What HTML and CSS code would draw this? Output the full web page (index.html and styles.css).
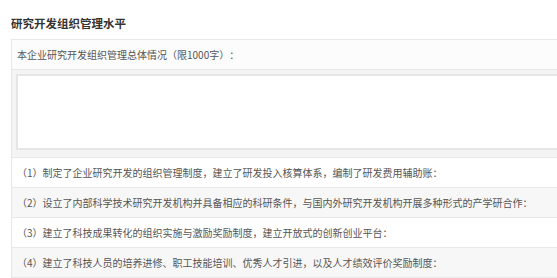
FILE: index.html
```html
<!DOCTYPE html>
<html>

<head>
    <meta charset="UTF-8">
    <meta name="viewport" content="width=device-width, initial-scale=1.0">
    <title>研究开发组织管理水平</title>
    <link rel="stylesheet" href="styles.css">
</head>

<body>
    <h3 class="section-title">研究开发组织管理水平</h3>
    <table class="form-table">
        <tr class="row-head">
            <td>本企业研究开发组织管理总体情况（限1000字）：</td>
        </tr>
        <tr class="row-input">
            <td><textarea class="summary"></textarea></td>
        </tr>
        <tr>
            <td>（1）制定了企业研究开发的组织管理制度，建立了研发投入核算体系，编制了研发费用辅助账：</td>
        </tr>
        <tr class="row-alt">
            <td>（2）设立了内部科学技术研究开发机构并具备相应的科研条件，与国内外研究开发机构开展多种形式的产学研合作：</td>
        </tr>
        <tr>
            <td>（3）建立了科技成果转化的组织实施与激励奖励制度，建立开放式的创新创业平台：</td>
        </tr>
        <tr class="row-alt">
            <td>（4）建立了科技人员的培养进修、职工技能培训、优秀人才引进，以及人才绩效评价奖励制度：</td>
        </tr>
    </table>
</body>

</html>
```

FILE: styles.css
```css
body {
    margin: 0;
    padding: 17px 0 0 11px;
    background-color: #fff;
    font-family: 'Noto Sans CJK SC', 'Liberation Sans', sans-serif;
    color: #555;
    overflow: hidden;
}

.section-title {
    margin: 0 0 10px 0;
    font-size: 11.5px;
    line-height: 12px;
    font-weight: bold;
    color: #333;
}

.form-table {
    width: 600px;
    border-collapse: collapse;
    border-left: 1px solid #e8e8e8;
}

.form-table td {
    height: 29px;
    padding: 0 0 0 5px;
    border-top: 1px solid #e8e8e8;
    border-bottom: 1px solid #e8e8e8;
    font-size: 10px;
    line-height: 12px;
    white-space: nowrap;
    text-spacing-trim: space-all;
}

.row-head td {
    background-color: #fcfcfc;
}

.row-input td {
    height: auto;
    padding: 4px 0 7px 4px;
    background-color: #f4f4f4;
}

.summary {
    display: block;
    box-sizing: border-box;
    width: 590px;
    height: 76px;
    margin: 0;
    border: 2px solid #e6e6e6;
    background-color: #fff;
    resize: none;
}

.row-alt td {
    background-color: #f7f7f7;
}
```
